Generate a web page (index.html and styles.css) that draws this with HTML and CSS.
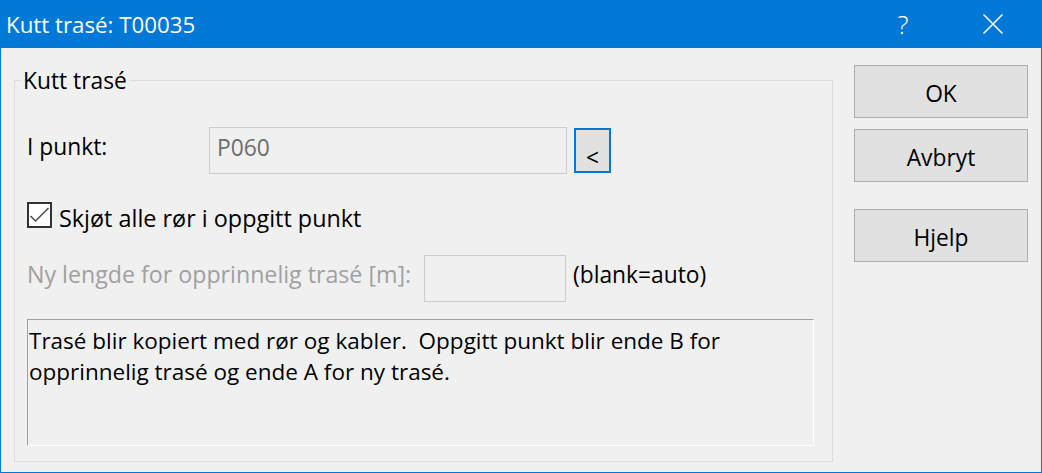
FILE: index.html
```html
<!DOCTYPE html>
<html lang="no">
<head>
<meta charset="utf-8">
<title>Kutt trasé: T00035</title>
<link rel="stylesheet" href="styles.css">
</head>
<body>
<div class="window">
  <div class="titlebar">
    <span class="title">Kutt trasé: T00035</span>
    <span class="cap-btn help">?</span>
    <span class="cap-btn close">
      <svg width="20" height="20" viewBox="0 0 20 20"><path d="M0.5 0.5 L19.5 19.5 M19.5 0.5 L0.5 19.5" stroke="#ffffff" stroke-width="1.5" fill="none"/></svg>
    </span>
  </div>
  <div class="client">
    <div class="group">
      <span class="legend">Kutt trasé</span>
      <div class="row row-point">
        <span class="lbl lbl-point">I punkt:</span>
        <div class="field field-point">P060</div>
        <button class="pick">&lt;</button>
      </div>
      <div class="row row-check">
        <span class="checkbox">
          <svg width="21" height="21" viewBox="0 0 21 21"><path d="M1.5 11 L6.5 16 L19.5 3" stroke="#4a4a4a" stroke-width="1.5" fill="none"/></svg>
        </span>
        <span class="check-label">Skjøt alle rør i oppgitt punkt</span>
      </div>
      <div class="row row-length">
        <span class="lbl lbl-length disabled">Ny lengde for opprinnelig trasé [m]:</span>
        <div class="field field-length"></div>
        <span class="hint">(blank=auto)</span>
      </div>
      <div class="desc">Trasé blir kopiert med rør og kabler.&nbsp; Oppgitt punkt blir ende B for<br>opprinnelig trasé og ende A for ny trasé.</div>
    </div>
    <div class="buttons">
      <button class="btn btn-ok">OK</button>
      <button class="btn btn-cancel">Avbryt</button>
      <button class="btn btn-help">Hjelp</button>
    </div>
  </div>
</div>
</body>
</html>
```
FILE: styles.css
```css
html, body {
  margin: 0;
  padding: 0;
}
body {
  background: #f0f0f0;
  font-family: "Open Sans", "Noto Sans", sans-serif;
  font-size: 22.8px;
  color: #000000;
}
.window {
  width: 1042px;
  height: 473px;
  box-sizing: border-box;
  border: 1px solid #0078d7;
  display: flex;
  flex-direction: column;
  background: #f0f0f0;
}
.titlebar {
  height: 47px;
  flex: none;
  background: #0078d7;
  color: #ffffff;
  display: flex;
  align-items: center;
  padding-right: 3px;
}
.title {
  flex: 1;
  padding-left: 5px;
  font-size: 22.3px;
  line-height: 30px;
}
.cap-btn {
  width: 90px;
  height: 47px;
  display: flex;
  align-items: center;
  justify-content: center;
}
.help {
  font-size: 26px;
  font-weight: 300;
  margin-top: -1px;
}
.close svg {
  display: block;
  margin-top: -1px;
}
.client {
  flex: 1;
  display: flex;
  align-items: flex-start;
  padding: 0 13px;
}
.group {
  position: relative;
  margin-top: 32px;
  width: 819px;
  height: 382px;
  box-sizing: border-box;
  border: 1px solid #dcdcdc;
  padding: 46px 0 0 12px;
  display: flex;
  flex-direction: column;
}
.legend {
  position: absolute;
  top: -16px;
  left: 6px;
  padding: 0 2px;
  background: #f0f0f0;
  line-height: 31px;
}
.row {
  display: flex;
  align-items: flex-start;
}
.row-point {
  height: 47px;
}
.lbl {
  line-height: 31px;
  margin-top: 4px;
  white-space: nowrap;
}
.lbl-point {
  width: 182px;
}
.lbl-length {
  width: 397px;
  font-size: 23.2px;
}
.disabled {
  color: #a0a0a0;
}
.field {
  height: 47px;
  box-sizing: border-box;
  border: 1px solid #cccccc;
  background: #f0f0f0;
  line-height: 31px;
  padding: 4px 7px 0;
}
.field-point {
  width: 358px;
  color: #6d6d6d;
}
.field-length {
  width: 142px;
}
.pick {
  margin: 1px 0 0 7px;
  width: 37px;
  height: 45px;
  box-sizing: border-box;
  border: 2px solid #0078d7;
  background: #e1e1e1;
  font-family: inherit;
  font-size: 22.8px;
  color: #000000;
  padding: 14px 0 0;
  line-height: 27px;
}
.row-check {
  margin-top: 26px;
  height: 31px;
}
.checkbox {
  margin-top: 2px;
  width: 25px;
  height: 26px;
  box-sizing: border-box;
  border: 2px solid #333333;
  background: #ffffff;
  display: flex;
  align-items: center;
  justify-content: center;
}
.checkbox svg {
  display: block;
}
.check-label {
  margin: 3px 0 0 7px;
  font-size: 23.4px;
  line-height: 31px;
  white-space: nowrap;
}
.row-length {
  margin-top: 24px;
  height: 47px;
}
.hint {
  margin: 4px 0 0 7px;
  line-height: 31px;
  white-space: nowrap;
}
.desc {
  margin-top: 17px;
  width: 787px;
  height: 127px;
  box-sizing: border-box;
  border-top: 1px solid #a0a0a0;
  border-left: 1px solid #a0a0a0;
  border-right: 1px solid #ffffff;
  border-bottom: 1px solid #ffffff;
  padding: 5px 1px 0;
  font-size: 22.5px;
  line-height: 31px;
  white-space: nowrap;
}
.buttons {
  margin: 17px 0 0 21px;
  width: 174px;
  display: flex;
  flex-direction: column;
}
.btn {
  width: 174px;
  height: 53px;
  box-sizing: border-box;
  border: 1px solid #adadad;
  background: #e1e1e1;
  font-family: inherit;
  font-size: 22.8px;
  color: #000000;
  padding: 3px 0 0;
  line-height: 31px;
}
.btn-cancel {
  margin-top: 11px;
}
.btn-help {
  margin-top: 27px;
}
```
